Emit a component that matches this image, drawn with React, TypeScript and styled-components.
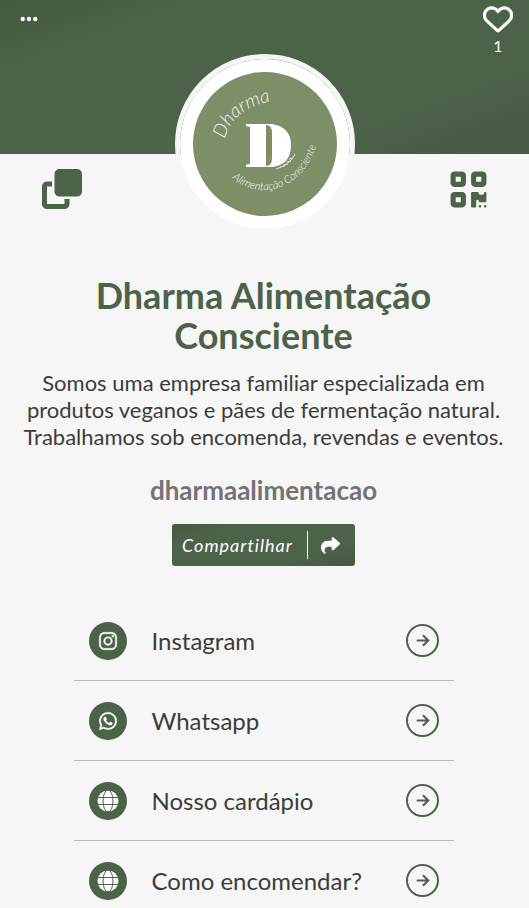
import React from 'react';
import styled, { createGlobalStyle } from 'styled-components';
import { FaClone, FaEllipsis, FaQrcode, FaRegHeart, FaShare } from 'react-icons/fa6';
import { IoArrowForward, IoLogoInstagram, IoLogoWhatsapp } from 'react-icons/io5';

const green = '#4c6249';
const gradient = 'linear-gradient(160deg, #425a3d 0%, #4c6249 20%, #4c6249 75%, #475943 100%)';

const GlobalStyle = createGlobalStyle`
  * { box-sizing: border-box; }
  body {
    margin: 0;
    background: #f6f6f6;
    color: #3c3c3c;
    font-family: Lato, "Open Sans", sans-serif;
  }
  button { font: inherit; border: 0; padding: 0; background: none; cursor: pointer; }
`;

const Banner = styled.header`
  display: flex;
  justify-content: space-between;
  align-items: flex-start;
  height: 154px;
  padding: 4px 16px 0 19px;
  background: ${gradient};
  color: #fff;
`;

const MenuButton = styled.button`
  display: flex;
  padding-top: 5px;
  color: #fff;
  font-size: 20px;
`;

const LikeButton = styled.button`
  display: flex;
  flex-direction: column;
  align-items: center;
  gap: 2px;
  color: #fff;
  font-size: 16px;
  line-height: 20px;
  svg { font-size: 30px; stroke-width: 8px; }
`;

const ProfileBar = styled.div`
  display: flex;
  justify-content: space-between;
  align-items: flex-end;
  margin-top: -100px;
  padding: 0 40px 0 42px;
`;

const IconButton = styled.button<{ $size: number }>`
  display: flex;
  align-items: center;
  height: 40px;
  margin-bottom: 25px;
  color: ${green};
  font-size: ${(p) => p.$size}px;
`;

const Avatar = styled.div`
  width: 180px;
  height: 180px;
  border: 5px solid #f6f6f6;
  border-radius: 50%;
  svg { display: block; width: 100%; height: 100%; }
`;

const Intro = styled.main`
  display: flex;
  flex-direction: column;
  align-items: center;
  padding: 41px 17px 0 15px;
  text-align: center;
`;

const Title = styled.h1`
  max-width: 400px;
  margin: 0;
  color: ${green};
  font-size: 36px;
  font-weight: 700;
  line-height: 40px;
`;

const Bio = styled.p`
  margin: 14px 0 0;
  font-size: 22px;
  line-height: 27px;
`;

const Handle = styled.h2`
  margin: 24px 0 0;
  color: #737373;
  font-size: 26px;
  font-weight: 700;
  line-height: 32px;
`;

const ShareButton = styled.button`
  && {
    display: flex;
    align-items: center;
    height: 42px;
    margin-top: 18px;
    padding: 0 15px 0 10px;
    border-radius: 3px;
    background: ${gradient};
    color: #fff;
    font-size: 18px;
    font-style: italic;
    letter-spacing: 1px;
  }
  svg { font-size: 19px; }
`;

const Divider = styled.span`
  width: 1px;
  height: 28px;
  margin: 0 13px 0 14px;
  background: #fff;
`;

const LinkList = styled.ul`
  width: 100%;
  max-width: 380px;
  margin: 35px 0 0;
  padding: 0;
  list-style: none;
`;

const LinkItem = styled.li`
  border-bottom: 1px solid #bbb;
`;

const LinkRow = styled.a`
  display: flex;
  align-items: center;
  height: 79px;
  padding: 0 15px;
  color: #3c3c3c;
  font-size: 24px;
  text-align: left;
  text-decoration: none;
`;

const LinkBadge = styled.span`
  display: flex;
  align-items: center;
  justify-content: center;
  width: 38px;
  height: 38px;
  border-radius: 50%;
  background: ${green};
  color: #fff;
  font-size: 20px;
  svg { stroke: #fff; stroke-width: 10px; }
`;

const GlobeSvg = styled.svg`
  && { width: 22px; height: 22px; stroke: ${green}; stroke-width: 1px; }
`;

const GlobeIcon = () => (
  <GlobeSvg viewBox="0 0 22 22" fill="none" aria-hidden="true">
    <circle cx="11" cy="11" r="10.500" fill="#fff" stroke="none" />
    <ellipse cx="11" cy="11" rx="5" ry="11" />
    <path d="M0 7.500 H22 M0 14.500 H22" />
  </GlobeSvg>
);

const LinkLabel = styled.span`
  flex: 1;
  padding-left: 25px;
`;

const ArrowRing = styled.span`
  display: flex;
  align-items: center;
  justify-content: center;
  width: 33px;
  height: 33px;
  border: 2px solid ${green};
  border-radius: 50%;
  color: ${green};
  font-size: 19px;
  path { stroke-width: 56px; stroke-linecap: butt; stroke-linejoin: miter; }
`;

const links = [
  { label: 'Instagram', icon: <IoLogoInstagram /> },
  { label: 'Whatsapp', icon: <IoLogoWhatsapp /> },
  { label: 'Nosso cardápio', icon: <GlobeIcon /> },
  { label: 'Como encomendar?', icon: <GlobeIcon /> },
];

const Logo = () => (
  <svg viewBox="0 0 170 170" role="img" aria-label="Dharma Alimentação Consciente">
    <defs>
      <path id="arcTop" d="M45 80 C50 60 64 45 108 39" />
      <path id="arcBottom" d="M52 119 C79 142 123 134 138 82" />
    </defs>
    <circle cx="85" cy="85" r="85" fill="#fff" />
    <circle cx="85" cy="85" r="72" fill="#7e8e66" />
    <text fill="#f4f6ee" fontFamily="Lato" fontStyle="italic" fontWeight="300" fontSize="19">
      <textPath href="#arcTop">Dharma</textPath>
    </text>
    <text x="65" y="108" fill="#fff" fontFamily="Liberation Serif" fontWeight="700" fontSize="66">D</text>
    <path d="M70 65 H90 Q111 67 111 86 Q111 107 90 108 H70 Z" fill="#fff" />
    <path d="M86 66 Q92 66 92 74 V99 Q92 107 86 107 Z" fill="#7e8e66" />
    <path
      d="M96 110 Q110 106 115 95 M100 108 l5 -1 M103 106 l5 -1 M106 103 l5 -1 M109 100 l4 -1"
      fill="none"
      stroke="#dfe4d3"
      strokeWidth="1"
    />
    <text fill="#f4f6ee" fontFamily="Lato" fontStyle="italic" fontWeight="300" fontSize="11">
      <textPath href="#arcBottom">Alimentação Consciente</textPath>
    </text>
  </svg>
);

export default function App() {
  return (
    <>
      <GlobalStyle />
      <Banner>
        <MenuButton aria-label="Menu"><FaEllipsis /></MenuButton>
        <LikeButton aria-label="Curtir"><FaRegHeart />1</LikeButton>
      </Banner>
      <ProfileBar>
        <IconButton $size={40} aria-label="Copiar"><FaClone /></IconButton>
        <Avatar><Logo /></Avatar>
        <IconButton $size={41} aria-label="QR Code"><FaQrcode /></IconButton>
      </ProfileBar>
      <Intro>
        <Title>Dharma Alimentação Consciente</Title>
        <Bio>
          Somos uma empresa familiar especializada em produtos veganos e pães de
          fermentação natural. Trabalhamos sob encomenda, revendas e eventos.
        </Bio>
        <Handle>dharmaalimentacao</Handle>
        <ShareButton>Compartilhar<Divider /><FaShare /></ShareButton>
        <LinkList>
          {links.map((link) => (
            <LinkItem key={link.label}>
              <LinkRow href="#">
                <LinkBadge>{link.icon}</LinkBadge>
                <LinkLabel>{link.label}</LinkLabel>
                <ArrowRing><IoArrowForward /></ArrowRing>
              </LinkRow>
            </LinkItem>
          ))}
        </LinkList>
      </Intro>
    </>
  );
}
